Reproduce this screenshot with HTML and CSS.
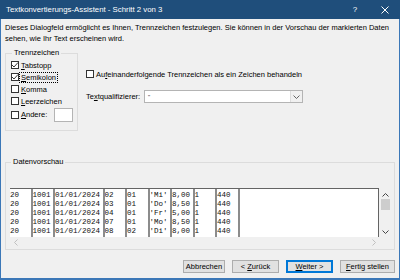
FILE: index.html
```html
<!DOCTYPE html>
<html lang="de">
<head>
    <meta charset="UTF-8">
    <title>Textkonvertierungs-Assistent</title>
    <link rel="stylesheet" href="styles.css">
</head>
<body>
<div class="window">
    <div class="titlebar">
        <span class="title">Textkonvertierungs-Assistent - Schritt 2 von 3</span>
        <span class="tb-btn">?</span>
        <span class="tb-btn">
            <svg width="8" height="8" viewBox="0 0 8 8"><path d="M0.5 0.5L7.5 7.5M7.5 0.5L0.5 7.5" stroke="#fff" stroke-width="1"/></svg>
        </span>
    </div>
    <div class="client">
        <p class="intro">Dieses Dialogfeld ermöglicht es Ihnen, Trennzeichen festzulegen. Sie können in der Vorschau der markierten Daten sehen, wie Ihr Text erscheinen wird.</p>

        <div class="options">
            <fieldset class="group delims">
                <legend>Trennzeichen</legend>
                <div class="check">
                    <span class="box"><svg width="8" height="8" viewBox="0 0 8 8"><path d="M1 4L3 6L7 1.5" fill="none" stroke="#222" stroke-width="0.9"/></svg></span>
                    <span><u>T</u>abstopp</span>
                </div>
                <div class="check">
                    <span class="box"><svg width="8" height="8" viewBox="0 0 8 8"><path d="M1 4L3 6L7 1.5" fill="none" stroke="#222" stroke-width="0.9"/></svg></span>
                    <span class="focus"><u>S</u>emikolon</span>
                </div>
                <div class="check">
                    <span class="box"></span>
                    <span><u>K</u>omma</span>
                </div>
                <div class="check">
                    <span class="box"></span>
                    <span><u>L</u>eerzeichen</span>
                </div>
                <div class="check other">
                    <span class="box"></span>
                    <span><u>A</u>ndere:</span>
                    <span class="textbox"></span>
                </div>
            </fieldset>

            <div class="side">
                <div class="check">
                    <span class="box"></span>
                    <span>Au<u>f</u>einanderfolgende Trennzeichen als ein Zeichen behandeln</span>
                </div>
                <div class="qualifier">
                    <span class="q-label">Te<u>x</u>tqualifizierer:</span>
                    <div class="combo">
                        <span class="combo-value">"</span>
                        <span class="combo-btn">
                            <svg width="7" height="4" viewBox="0 0 7 4"><path d="M0.5 0.5L3.5 3.5L6.5 0.5" fill="none" stroke="#555" stroke-width="0.9"/></svg>
                        </span>
                    </div>
                </div>
            </div>
        </div>

        <fieldset class="group preview">
            <legend>Datenvorschau</legend>
            <div class="grid-wrap">
                <div class="data">
                    <div class="col">20
20
20
20
20</div>
                    <div class="col">1001
1001
1001
1001
1001</div>
                    <div class="col wide">01/01/2024
01/01/2024
01/01/2024
01/01/2024
01/01/2024</div>
                    <div class="col">02
03
04
07
08</div>
                    <div class="col">01
01
01
01
02</div>
                    <div class="col">'Mi'
'Do'
'Fr'
'Mo'
'Di'</div>
                    <div class="col">8,00
8,50
5,00
8,50
8,00</div>
                    <div class="col">1
1
1
1
1</div>
                    <div class="col">440
440
440
440
440</div>
                </div>
                <div class="vscroll">
                    <svg class="arrow" width="7" height="4" viewBox="0 0 7 4"><path d="M0.5 3.5L3.5 0.5L6.5 3.5" fill="none" stroke="#444" stroke-width="1"/></svg>
                    <span class="thumb"></span>
                    <svg class="arrow down" width="7" height="4" viewBox="0 0 7 4"><path d="M0.5 0.5L3.5 3.5L6.5 0.5" fill="none" stroke="#444" stroke-width="1"/></svg>
                </div>
                <div class="hscroll">
                    <svg width="4" height="7" viewBox="0 0 4 7"><path d="M3.5 0.5L0.5 3.5L3.5 6.5" fill="none" stroke="#c0c0c0" stroke-width="1"/></svg>
                    <svg width="4" height="7" viewBox="0 0 4 7"><path d="M0.5 0.5L3.5 3.5L0.5 6.5" fill="none" stroke="#c0c0c0" stroke-width="1"/></svg>
                </div>
            </div>
        </fieldset>

        <div class="buttons">
            <span class="btn w42"><span>Abbrechen</span></span>
            <span class="btn w47"><span>&lt; <u>Z</u>urück</span></span>
            <span class="btn w47 default"><span><u>W</u>eiter &gt;</span></span>
            <span class="btn w55"><span><u>F</u>ertig stellen</span></span>
        </div>
    </div>
</div>
</body>
</html>
```
FILE: styles.css
```css
* {
    margin: 0;
    padding: 0;
    box-sizing: border-box;
}

body {
    font-family: "Liberation Sans", Arial, sans-serif;
    font-size: 7.5px;
    color: #000;
    background: #f0f0f0;
}

u {
    text-decoration-thickness: 1px;
    text-underline-offset: 1px;
}

.window {
    width: 400px;
    height: 280px;
    display: flex;
    flex-direction: column;
}

.titlebar {
    height: 19px;
    background: #1f4e7b;
    color: #fff;
    display: flex;
    align-items: center;
    padding-left: 6px;
    font-size: 7.8px;
}

.title {
    flex: 1;
}

.tb-btn {
    width: 30px;
    height: 19px;
    display: flex;
    align-items: center;
    justify-content: center;
    font-size: 8px;
}

.client {
    flex: 1;
    border: 1px solid #3b77b7;
    border-top: 0;
    border-bottom-width: 2px;
    background: #f0f0f0;
    padding: 3px 4px 0 4px;
    display: flex;
    flex-direction: column;
}

.intro {
    line-height: 11px;
}

/* group boxes */
.group {
    border: 1px solid #dcdcdc;
    min-width: 0;
}

.group legend {
    line-height: 10px;
    padding: 0 2px;
    margin-left: 1px;
}

.options {
    display: flex;
    margin-top: 4px;
}

.delims {
    width: 73px;
    padding: 1px 4px 8px 5px;
}

.check {
    display: flex;
    align-items: center;
    gap: 2px;
    height: 12px;
    white-space: nowrap;
}

.check .box {
    width: 8px;
    height: 8px;
    border: 1px solid #333;
    background: #fff;
    display: flex;
    align-items: center;
    justify-content: center;
    flex: none;
}

.check .box svg {
    flex: none;
}

.focus {
    outline: 1px dotted #000;
    outline-offset: 0;
    padding: 0 1px;
    margin-left: -1px;
    line-height: 9px;
}

.check.other {
    height: 15px;
}

.textbox {
    margin-left: auto;
    width: 19px;
    height: 14px;
    background: #fff;
    border: 1px solid #b4b4b4;
}

.side {
    margin-left: 8px;
    padding-top: 20px;
}

.qualifier {
    display: flex;
    align-items: center;
    margin-top: 10px;
}

.q-label {
    width: 58px;
}

.combo {
    width: 159px;
    height: 13px;
    background: #fff;
    border: 1px solid #b4b4b4;
    display: flex;
    align-items: center;
}

.combo-value {
    flex: 1;
    padding-left: 3px;
    font-size: 6px;
    color: #333;
}

.combo-btn {
    width: 12px;
    height: 11px;
    background: #f0f0f0;
    border-left: 1px solid #dcdcdc;
    display: flex;
    align-items: center;
    justify-content: center;
}

/* data preview */
.preview {
    margin-top: 26px;
    padding: 21px 2px 1px 4px;
}

.grid-wrap {
    display: grid;
    grid-template-columns: 1fr 13px;
    grid-template-rows: 49px 11px;
}

.data {
    background: #fff;
    border-top: 1px solid #646464;
    border-right: 1px solid #646464;
    display: flex;
    font-family: "Liberation Mono", "Courier New", monospace;
    font-size: 7.5px;
    line-height: 9px;
    color: #111;
}

.col {
    width: 5ch;
    border-right: 2px solid #8c8c8c;
    padding-top: 2px;
    white-space: pre;
    overflow: hidden;
}

.col.wide {
    width: 11ch;
}

.vscroll {
    display: flex;
    flex-direction: column;
    align-items: center;
    padding-top: 5px;
}

.vscroll .thumb {
    width: 9px;
    height: 11px;
    background: #cdcdcd;
    margin-top: 2px;
}

.vscroll .down {
    margin-top: auto;
    margin-bottom: 3px;
}

.hscroll {
    display: flex;
    align-items: center;
    justify-content: space-between;
    padding: 0 3px 0 4px;
}

/* buttons */
.buttons {
    display: flex;
    justify-content: flex-end;
    gap: 7px;
    margin-top: 10px;
}

.btn {
    height: 13px;
    background: #e1e1e1;
    border: 1px solid #adadad;
    display: flex;
    align-items: center;
    justify-content: center;
    white-space: nowrap;
}

.btn.default {
    border: 2px solid #0078d7;
}

.w42 { width: 42px; }
.w47 { width: 47px; }
.w55 { width: 55px; }
```
